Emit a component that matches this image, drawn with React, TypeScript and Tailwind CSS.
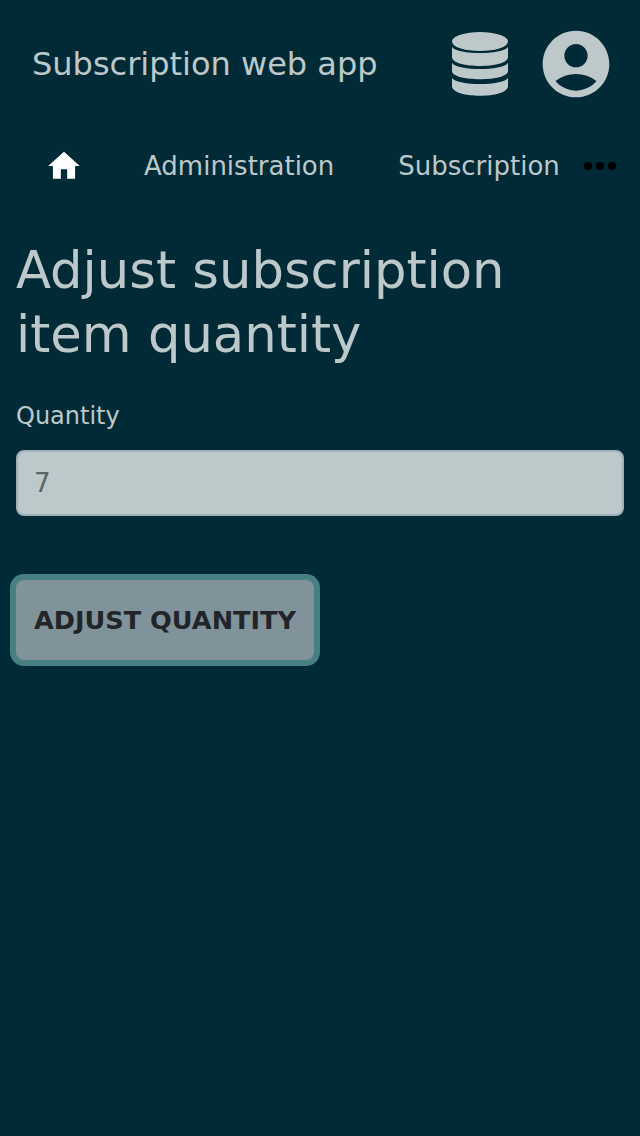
import { FaDatabase } from "react-icons/fa";
import { MdAccountCircle, MdHome } from "react-icons/md";

export default function App() {
  return (
    <div className="min-h-[1136px] w-full bg-[#002b36] text-[#bdc8cb] font-['DejaVu_Sans',sans-serif]">
      <header className="flex h-32 items-center pl-8 pr-6">
        <div className="flex-1 whitespace-nowrap text-[32px] leading-[48px]">Subscription web app</div>
        <svg viewBox="0 0 56 64" className="mr-7 h-16 w-14" fill="currentColor">
          <ellipse cx="28" cy="9.5" rx="28" ry="9.5" />
          <path d="M0 15C6 23 50 23 56 15V25C56 37 0 37 0 25Z" />
          <path d="M0 31C6 39 50 39 56 31V39C56 50 0 50 0 39Z" />
          <path d="M0 46C6 54 50 54 56 46V54C56 67 0 67 0 54Z" />
        </svg>
        <MdAccountCircle className="size-20" />
      </header>
      <nav className="flex h-[76px] items-center">
        <div className="flex w-32 justify-center text-white"><MdHome className="size-[38px]" /></div>
        <div className="flex w-[440px] overflow-hidden whitespace-nowrap text-[26px] leading-10">
          <a className="ml-4">Administration</a>
          <a className="ml-16">Subscription administration</a>
        </div>
        <div className="ml-4 flex gap-1 text-black">
          <i className="size-2 rounded-full bg-black" /><i className="size-2 rounded-full bg-black" /><i className="size-2 rounded-full bg-black" />
        </div>
      </nav>
      <main className="px-4 pt-[34px]">
        <h1 className="text-[51.2px] leading-[64px]">Adjust subscription<br />item quantity</h1>
        <label className="mt-8 block text-2xl leading-9">Quantity</label>
        <input className="mt-4 block h-[66px] w-full rounded-lg border-2 border-[#9fb0b8] bg-[#bdc8cb] px-4 text-[26px] text-[#586568]" defaultValue="7" />
        <button className="mt-16 block h-20 w-[298px] rounded-lg bg-[#80939a] text-[25.6px] font-bold text-[#212529] ring-[6px] ring-[#478080]">ADJUST QUANTITY</button>
      </main>
    </div>
  );
}
